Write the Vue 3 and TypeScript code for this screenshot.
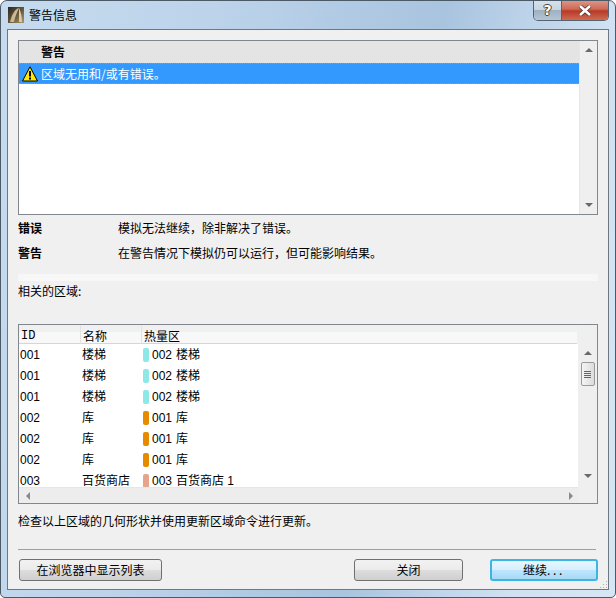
<script setup lang="ts">
interface Row { id: string; name: string; color: string; zone: string; zoneName: string }
const z = (id: string, name: string, color: string, zone: string, zoneName: string): Row => ({ id, name, color, zone, zoneName })
const rows: Row[] = [
  z('001', '楼梯', '#8ee8e8', '002', '楼梯'),
  z('001', '楼梯', '#8ee8e8', '002', '楼梯'),
  z('001', '楼梯', '#8ee8e8', '002', '楼梯'),
  z('002', '库', '#e68a00', '001', '库'),
  z('002', '库', '#e68a00', '001', '库'),
  z('002', '库', '#e68a00', '001', '库'),
  z('003', '百货商店', '#e6a48c', '003', '百货商店 1'),
]
</script>

<template>
  <div class="window">
    <header class="titlebar">
      <svg class="app-icon" width="16" height="16" viewBox="0 0 16 16">
        <defs>
          <linearGradient id="ai" x1="0" y1="0" x2="1" y2="1">
            <stop offset="0" stop-color="#2a2520" />
            <stop offset="0.55" stop-color="#6b5a3a" />
            <stop offset="1" stop-color="#b09a6e" />
          </linearGradient>
        </defs>
        <rect width="16" height="16" fill="url(#ai)" />
        <path d="M2 15 C4 7 7 2 11 1 C9 5 7 10 6 15 Z" fill="#c8b894" />
        <path d="M11 1 C13 5 14 10 14 15 L11 15 C11 10 11 5 11 1 Z" fill="#d8ccae" />
      </svg>
      <span class="title">警告信息</span>
      <div class="win-buttons">
        <div class="win-help">?</div>
        <div class="win-close">
          <svg width="14" height="11" viewBox="0 0 14 11">
            <path d="M2 1 L12 10 M12 1 L2 10" stroke="#4a2a24" stroke-width="4" fill="none" />
            <path d="M2 1 L12 10 M12 1 L2 10" stroke="#fff" stroke-width="2.6" fill="none" />
          </svg>
        </div>
      </div>
    </header>

    <main class="panel">
      <section class="warn-list">
        <div class="warn-body">
          <div class="warn-head">警告</div>
          <div class="warn-row">
            <svg width="16" height="16" viewBox="0 0 16 16" class="warn-icon">
              <path d="M8 .8 L15.5 15 L.5 15 Z" fill="#ffe800" stroke="#000" stroke-width="1" stroke-linejoin="round" />
              <rect x="7" y="5" width="2" height="5.5" fill="#000" />
              <rect x="7" y="11.5" width="2" height="2" fill="#000" />
            </svg>
            <span>区域无用和/或有错误。</span>
          </div>
        </div>
        <div class="vscroll plain">
          <i class="arrow up"></i>
          <i class="arrow down"></i>
        </div>
      </section>

      <div class="info">
        <b>错误</b><span>模拟无法继续，除非解决了错误。</span>
        <b>警告</b><span>在警告情况下模拟仍可以运行，但可能影响结果。</span>
      </div>

      <div class="strip"></div>
      <p class="related">相关的区域:</p>

      <section class="table">
        <div class="table-main">
          <div class="thead">
            <span class="th mono">ID</span>
            <span class="th">名称</span>
            <span class="th last">热量区</span>
          </div>
          <div class="tbody">
            <div v-for="(r, i) in rows" :key="i" class="tr">
              <span class="td-id">{{ r.id }}</span>
              <span class="td-name">{{ r.name }}</span>
              <span class="td-zone">
                <i class="chip" :style="{ background: r.color }"></i>
                <span class="zone-id">{{ r.zone }}</span>
                <span>{{ r.zoneName }}</span>
              </span>
            </div>
          </div>
          <div class="hscroll">
            <i class="arrow left"></i>
            <i class="arrow right"></i>
          </div>
        </div>
        <div class="vscroll table-scroll">
          <i class="arrow up"></i>
          <div class="thumb"><em></em><em></em><em></em><em></em></div>
          <i class="arrow down"></i>
        </div>
      </section>

      <p class="hint">检查以上区域的几何形状并使用更新区域命令进行更新。</p>

      <hr class="sep" />

      <footer class="actions">
        <button class="btn wide">在浏览器中显示列表</button>
        <button class="btn close">关闭</button>
        <button class="btn primary">继续<span class="dots">...</span></button>
      </footer>
      <svg class="grip" width="9" height="9" viewBox="0 0 9 9">
        <g fill="#b0b0b0">
          <rect x="7" y="1" width="1" height="1" />
          <rect x="4" y="4" width="1" height="1" />
          <rect x="7" y="4" width="1" height="1" />
          <rect x="1" y="7" width="1" height="1" />
          <rect x="4" y="7" width="1" height="1" />
          <rect x="7" y="7" width="1" height="1" />
        </g>
      </svg>
    </main>
  </div>
</template>

<style>
html, body { margin: 0; background: #fff; }
</style>

<style scoped>
.window {
  width: 616px;
  height: 598px;
  box-sizing: border-box;
  display: flex;
  flex-direction: column;
  padding: 0 6px 7px;
  border: 1px solid #4c5a68;
  border-radius: 7px 7px 5px 5px;
  background: linear-gradient(100deg, #c6dbee 0%, #bcd3ea 30%, #a9c4df 62%, #cfe1f2 85%, #d6e6f4 100%);
  font: 12px/16px "Noto Sans CJK SC", "Liberation Sans", sans-serif;
  color: #000;
  overflow: hidden;
}
.titlebar {
  height: 28px;
  flex: none;
  display: flex;
  align-items: flex-start;
}
.app-icon { margin: 6px 0 0 1px; }
.title { margin: 6px 0 0 5px; font-size: 12px; line-height: 16px; }
.win-buttons {
  margin: -1px 0 0 auto;
  display: flex;
  height: 20px;
  border: 1px solid #566472;
  border-top: 0;
  border-radius: 0 0 5px 5px;
  overflow: hidden;
}
.win-help {
  width: 27px;
  text-align: center;
  color: #fff;
  font: bold 14px/20px "DejaVu Sans", sans-serif;
  text-shadow: 1px 0 0 #444, -1px 0 0 #444, 0 1px 0 #444, 0 -1px 0 #444;
  background: linear-gradient(#d6e2ec 0, #c8d6e2 48%, #9fb0c0 52%, #b4c6d6 100%);
  border-right: 1px solid #566472;
}
.win-close {
  width: 46px;
  display: flex;
  align-items: center;
  justify-content: center;
  background: linear-gradient(#dd9a8a 0, #cf6a58 45%, #b83a26 55%, #d06a52 100%);
}
.panel {
  position: relative;
  flex: 1;
  min-height: 0;
  background: #f0f0f0;
  border: 1px solid #6f7780;
  padding: 10px 10px 0;
  display: flex;
  flex-direction: column;
}
.warn-list {
  height: 175px;
  flex: none;
  box-sizing: border-box;
  border: 1px solid #82878f;
  background: #fff;
  display: flex;
}
.warn-body { flex: 1; min-width: 0; }
.warn-head {
  height: 22px;
  background: #e4e4e4;
  font-weight: 700;
  line-height: 22px;
  padding-left: 22px;
}
.warn-row {
  height: 21px;
  box-sizing: border-box;
  background: #3399ff;
  color: #fff;
  border-top: 1px dotted #e08a30;
  border-bottom: 1px dotted #e08a30;
  display: flex;
  align-items: center;
  gap: 3px;
  padding-left: 3px;
}
.warn-icon { flex: none; }
.vscroll {
  width: 18px;
  flex: none;
  background: #efefef;
  border-left: 1px solid #e6e6e6;
  box-sizing: border-box;
  position: relative;
  display: flex;
  flex-direction: column;
  align-items: center;
}
.arrow { display: block; width: 0; height: 0; flex: none; }
.arrow.up { border: 4px solid transparent; border-top: 0; border-bottom: 4px solid #6a6a6a; margin-top: 7px; }
.arrow.down { border: 4px solid transparent; border-bottom: 0; border-top: 4px solid #6a6a6a; margin-top: auto; margin-bottom: 7px; }
.arrow.left { border: 4px solid transparent; border-left: 0; border-right: 4px solid #8a8a8a; }
.arrow.right { border: 4px solid transparent; border-right: 0; border-left: 4px solid #8a8a8a; margin-left: auto; }
.info {
  display: grid;
  grid-template-columns: 100px 1fr;
  grid-auto-rows: 25px;
  align-items: center;
  height: 50px;
}
.info b { font-weight: 700; }
.strip { height: 7px; flex: none; margin: 9px 0 0; background: #f7f7f7; }
.related { margin: 0; height: 20px; line-height: 20px; }
.table {
  margin-top: 23px;
  height: 180px;
  flex: none;
  box-sizing: border-box;
  border: 1px solid #82878f;
  background: #f0f0f0;
  display: flex;
}
.table-main { flex: 1; min-width: 0; display: flex; flex-direction: column; }
.thead {
  height: 18px;
  flex: none;
  display: grid;
  grid-template-columns: 62px 61px 1fr;
  background: linear-gradient(#f0f0f0 0 7px, #f8f8f8 7px);
  border-bottom: 1px solid #d6d6d6;
  margin-right: 1px;
}
.th { padding: 2px 0 0 2px; line-height: 18px; border-right: 1px solid #e2e2e2; }
.th.last { border-right: 0; }
.mono { font-family: "Liberation Mono", monospace; }
.tbody { flex: 1; min-height: 0; overflow: hidden; background: #fff; margin-right: -2px; }
.tr {
  height: 21px;
  display: grid;
  grid-template-columns: 62px 61px 1fr;
  align-items: center;
  font-family: "Liberation Sans", "Noto Sans CJK SC", sans-serif;
}
.td-id { padding-left: 1px; }
.td-name { padding-left: 1px; }
.td-zone { display: flex; align-items: center; padding-left: 1px; }
.chip { width: 6px; height: 14px; border-radius: 2px; margin-right: 3px; flex: none; }
.zone-id { width: 24px; }
.hscroll {
  height: 15px;
  flex: none;
  display: flex;
  align-items: center;
  padding: 0 5px 0 7px;
  background: #ededed;
  border-top: 1px solid #e6e6e6;
}
.table-scroll { width: 19px; padding-top: 17px; border-left: 0; padding-bottom: 18px; }
.table-scroll .arrow.up { margin-top: 9px; }
.thumb {
  width: 14px;
  height: 24px;
  margin-top: 7px;
  box-sizing: border-box;
  border: 1px solid #9a9a9a;
  border-radius: 2px;
  background: linear-gradient(90deg, #f4f4f4, #dcdcdc);
  display: flex;
  flex-direction: column;
  align-items: center;
  justify-content: center;
  gap: 1px;
}
.thumb em { display: block; width: 7px; height: 1px; background: #666; }
.hint { margin: 9px 0 0; height: 16px; }
.sep {
  margin: 20px 2px 0 0;
  height: 1px;
  border: 0;
  background: #a0a0a0;
  flex: none;
}
.actions {
  display: flex;
  margin-top: 9px;
  padding-left: 1px;
}
.btn {
  height: 22px;
  box-sizing: border-box;
  padding: 0;
  border: 1px solid #707070;
  border-radius: 3px;
  background: linear-gradient(#f2f2f2 0, #ebebeb 48%, #dddddd 52%, #cfcfcf 100%);
  font: 12px/16px "Noto Sans CJK SC", "Liberation Sans", sans-serif;
  color: #000;
}
.wide { width: 143px; }
.close { width: 109px; margin-left: 192px; }
.primary {
  width: 108px;
  margin-left: 27px;
  border: 2px solid #3cb4e6;
  background: linear-gradient(#e8f6fe 0, #d8effc 48%, #bde6fd 52%, #a7d9f5 100%);
}
.dots { letter-spacing: 2.7px; }
.grip { position: absolute; right: 0; bottom: 0; }
</style>
